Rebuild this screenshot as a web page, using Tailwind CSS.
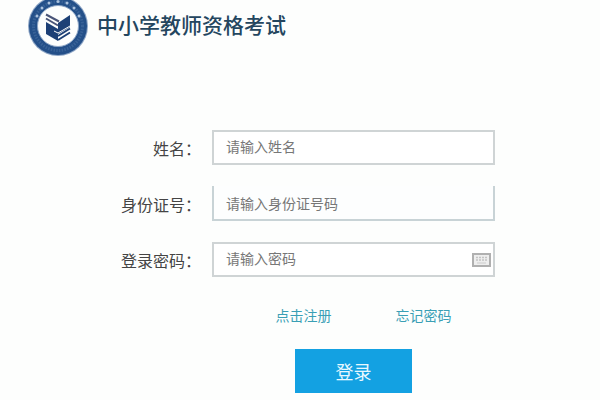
<!DOCTYPE html>
<html lang="zh-CN">
<head>
    <meta charset="UTF-8">
    <meta name="viewport" content="width=device-width, initial-scale=1.0">
    <title>中小学教师资格考试</title>
    <script src="https://cdn.jsdelivr.net/npm/@tailwindcss/browser@4"></script>
</head>
<body class="bg-[#fdfefd] font-['Noto_Sans_CJK_SC',sans-serif] text-[#444] overflow-x-hidden">
    <!-- Header -->
    <header class="flex items-center gap-[9px] pl-7 -mt-1">
        <svg class="size-[60px] shrink-0" viewBox="0 0 60 60" aria-hidden="true">
            <circle cx="30" cy="30" r="30" fill="#8ea6c6"/>
            <circle cx="30" cy="30" r="29" fill="#245089"/>
            <circle cx="30" cy="30" r="24.5" fill="none" stroke="#5f83b2" stroke-width="3" stroke-dasharray="1.5 1.2" pathLength="150" opacity=".35"/>
            <circle cx="30" cy="30" r="20.5" fill="#fdfefd" stroke="#8ea6c6"/>
            <g fill="#a9c0dc">
                <circle cx="9" cy="20" r="1.5"/>
                <circle cx="14" cy="12" r="1.5"/>
                <circle cx="21" cy="7" r="1.5"/>
                <circle cx="30" cy="5.5" r="1.5"/>
                <circle cx="39" cy="7" r="1.5"/>
                <circle cx="46" cy="12" r="1.5"/>
                <circle cx="51" cy="20" r="1.5"/>
            </g>
            <!-- Open book -->
            <path d="M18 26L30 33V45L18 38Z" fill="#1d4076"/>
            <path d="M30 27L42 19V31L30 38Z" fill="#1d4076"/>
            <path d="M18 18.5L31 25.500M18 22.500L30 29.500" stroke="#4a5578" stroke-width="2"/>
            <path d="M30 40L42 32.500M30 44L42 36.500" stroke="#1d4076" stroke-width="2"/>
            <path d="M26 35L30 37L42 30" fill="none" stroke="#fff" stroke-width="1"/>
        </svg>
        <h1 class="text-[21px] leading-8 -mt-1 whitespace-nowrap font-medium text-[#24465f]">中小学教师资格考试</h1>
    </header>

    <!-- Login form -->
    <form class="pt-[74px] pr-[105px]">
        <div class="grid grid-cols-[201px_1fr] gap-x-[11px] gap-y-[21px] items-center">
            <label for="name" class="text-right text-base">姓名：</label>
            <input id="name" type="text" placeholder="请输入姓名" class="w-full h-[35px] border-2 border-[#cfd4d5] bg-white px-3 pb-1 text-sm outline-none placeholder:text-[#777]">

            <label for="idNumber" class="text-right text-base">身份证号：</label>
            <input id="idNumber" type="text" placeholder="请输入身份证号码" class="w-full h-[35px] border-2 border-t-0 border-[#c8d3d6] bg-[#fdfefe] px-3 text-sm outline-none placeholder:text-[#777]">

            <label for="password" class="text-right text-base">登录密码：</label>
            <div class="relative">
                <input id="password" type="password" placeholder="请输入密码" class="block w-full h-[35px] border-2 border-[#cfd4d5] bg-white px-3 pb-1 text-sm outline-none placeholder:text-[#777]">
                <svg class="absolute right-1 top-1/2 -translate-y-1/2 w-[19px] h-[14px]" viewBox="0 0 19 14" aria-hidden="true">
                    <rect x="1" y="1" width="17" height="12" fill="#eee" stroke="#b0b0b0" stroke-width="2"/>
                    <path d="M4 4.500H15M4 7H15" stroke="#c4c4c4" stroke-width="1.500" stroke-dasharray="2 1"/>
                    <path d="M5 10H14" stroke="#ccc"/>
                </svg>
            </div>
        </div>

        <div class="pl-[212px]">
            <div class="flex justify-center gap-16 pt-7 pl-5 text-sm text-[#3a9fb5]">
                <a href="#">点击注册</a>
                <a href="#">忘记密码</a>
            </div>
            <div class="flex justify-center pt-6">
                <button type="submit" class="w-[117px] h-11 bg-[#13a1e2] text-lg text-[#e8f8ff]">登录</button>
            </div>
        </div>
    </form>
</body>
</html>
